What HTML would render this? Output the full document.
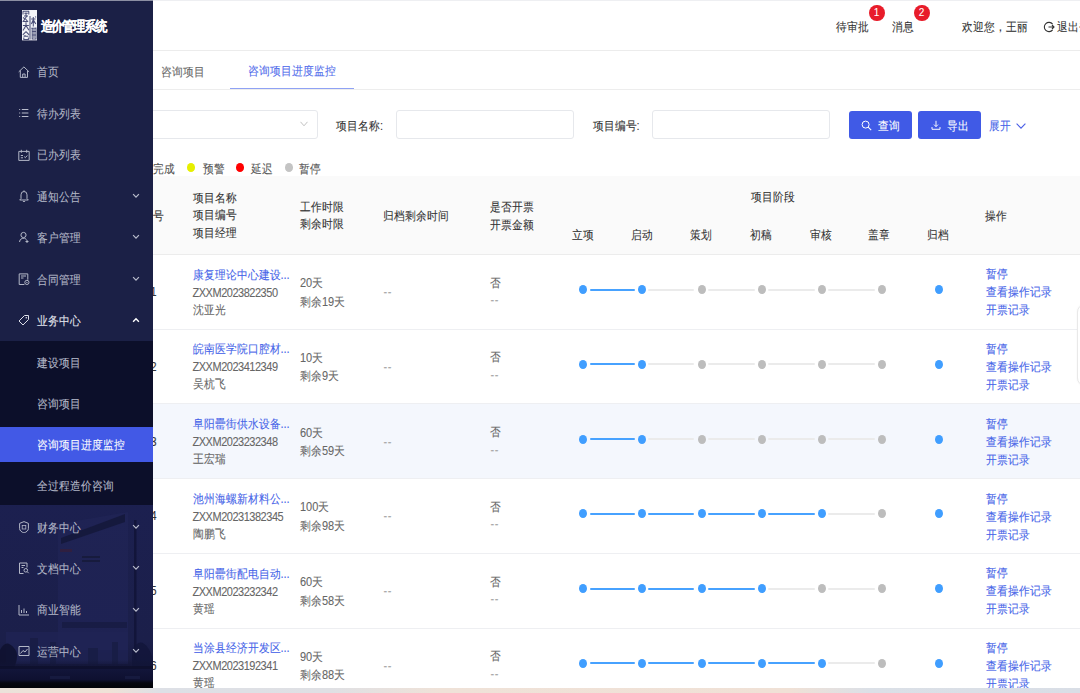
<!DOCTYPE html><html><head><meta charset="utf-8"><style>

*{box-sizing:border-box;margin:0;padding:0}
html,body{width:1080px;height:693px;overflow:hidden;background:#fff}
body{position:relative;font-family:"Liberation Sans", sans-serif;font-size:11px;color:#333;-webkit-text-stroke:0.08px}
.ab{position:absolute;white-space:nowrap}
.t{position:absolute;white-space:nowrap;line-height:14px;height:14px;transform:scaleY(1.12)}
.side{position:absolute;left:0;top:0;width:152.5px;height:688px;background:#1b2046;z-index:10;overflow:hidden}
.mi{position:absolute;left:0;width:152.5px;color:#b3b7c7}
.mi .tx{position:absolute;left:37px;line-height:14px;top:-7.1px;transform:scaleY(1.12)}
.mi svg{position:absolute;left:18px;top:-7px}
.mi .ar{position:absolute;left:131.5px;top:-4px}
.sub{position:absolute;left:0;top:341px;width:152.5px;height:164.2px;background:#0c0f2a}
.act{position:absolute;left:0;top:426.7px;width:152.5px;height:35px;background:#4259e6}
.inp{position:absolute;top:110.4px;height:28.4px;border:1px solid #e6e8ec;border-radius:3px;background:#fff}
.btn{position:absolute;top:110.5px;height:28px;border-radius:3px;background:#405ae6;color:#fff}
.link{color:#4563e8}
.dot{position:absolute;width:8.2px;height:9px;border-radius:50%}
.ln{position:absolute;height:1.9px;border-radius:1px}
.b{background:#409eff}
.g{background:#bdbdbd}
.lg{background:#ebebeb}
.ln.lb{background:#47a2ff}
.row{position:absolute;left:0;width:1080px;height:75px;border-bottom:1px solid #eeeff2}

</style></head><body>
<div class="ab" style="left:0;top:0;width:1080px;height:1px;background:#eeeff2;z-index:20"></div>
<div class="ab" style="left:0;top:0;width:152.5px;height:1px;background:#8c8fa3;z-index:21"></div>
<div class="ab" style="left:0;top:50px;width:1080px;height:1px;background:#ececec"></div>
<div class="t" style="left:836px;top:20px">待审批</div>
<div class="ab" style="left:868.5px;top:4.8px;width:16px;height:16.6px;border-radius:50%;background:#e81c2a;color:#fff;font-size:10px;line-height:16.6px;text-align:center;font-weight:normal">1</div>
<div class="t" style="left:892px;top:20px">消息</div>
<div class="ab" style="left:913.5px;top:4.8px;width:16px;height:16.6px;border-radius:50%;background:#e81c2a;color:#fff;font-size:10px;line-height:16.6px;text-align:center">2</div>
<div class="t" style="left:962px;top:20px">欢迎您，王丽</div>
<svg class="ab" style="left:1043px;top:21px" width="12" height="12" viewBox="0 0 12 12"><path d="M9.6 3.2A4.6 4.6 0 1 0 9.6 8.8" fill="none" stroke="#333" stroke-width="1.1"/><path d="M5.5 6H11M9 4l2 2-2 2" fill="none" stroke="#333" stroke-width="1.1"/></svg>
<div class="t" style="left:1057px;top:20px">退出登录</div>
<div class="ab" style="left:0;top:89px;width:1080px;height:1px;background:#ededed"></div>
<div class="t" style="left:160.5px;top:64.6px;color:#666">咨询项目</div>
<div class="t" style="left:247.6px;top:64.4px;color:#4f6beb">咨询项目进度监控</div>
<div class="ab" style="left:230.4px;top:87.6px;width:123.6px;height:1.5px;background:#8fa2f4"></div>
<div class="inp" style="left:60px;width:257.5px"></div>
<svg class="ab" style="left:300px;top:121px" width="8" height="6" viewBox="0 0 8 6"><path d="M0.5 0.8L4 4.8 7.5 0.8" fill="none" stroke="#bbb" stroke-width="0.9"/></svg>
<div class="t" style="left:336px;top:118.5px">项目名称:</div>
<div class="inp" style="left:395.5px;width:178px"></div>
<div class="t" style="left:592.5px;top:118.5px">项目编号:</div>
<div class="inp" style="left:652.2px;width:178px"></div>
<div class="btn" style="left:849px;width:63px"></div>
<svg class="ab" style="left:861px;top:119.5px" width="11" height="11" viewBox="0 0 11 11"><circle cx="4.6" cy="4.6" r="3.5" fill="none" stroke="#fff" stroke-width="1"/><path d="M7.2 7.2L10.2 10.2" stroke="#fff" stroke-width="1.1"/></svg>
<div class="t" style="left:877.5px;top:119px;color:#fff">查询</div>
<div class="btn" style="left:918px;width:63px"></div>
<svg class="ab" style="left:930.5px;top:119.5px" width="10" height="10" viewBox="0 0 10 10"><path d="M5 0.8V6.6M3 4.6L5 6.6 7 4.6M1 7V9.3H9V7" fill="none" stroke="#fff" stroke-width="0.95"/></svg>
<div class="t" style="left:946.5px;top:119px;color:#fff">导出</div>
<div class="t link" style="left:988.6px;top:119px">展开</div>
<svg class="ab" style="left:1015.5px;top:122.5px" width="10" height="6" viewBox="0 0 10 6"><path d="M0.6 0.6L5 5.2 9.4 0.6" fill="none" stroke="#4a5fe6" stroke-width="1.1"/></svg>
<div class="t" style="left:153px;top:161.8px;color:#555">完成</div>
<div class="ab" style="left:187.3px;top:163.4px;width:8px;height:8.6px;border-radius:50%;background:#e6ef00"></div>
<div class="t" style="left:203px;top:161.8px;color:#555">预警</div>
<div class="ab" style="left:236px;top:163.4px;width:8px;height:8.6px;border-radius:50%;background:#f00"></div>
<div class="t" style="left:251px;top:161.8px;color:#555">延迟</div>
<div class="ab" style="left:284.8px;top:163.4px;width:8px;height:8.6px;border-radius:50%;background:#c4c4c4"></div>
<div class="t" style="left:299px;top:161.8px;color:#555">暂停</div>
<div class="ab" style="left:0;top:176.4px;width:1080px;height:77.6px;background:#fafafa"></div>
<div class="ab" style="left:0;top:254px;width:1080px;height:1px;background:#ececec"></div>
<div class="t" style="left:142px;top:209px">序号</div>
<div class="t" style="left:193px;top:190.8px">项目名称</div>
<div class="t" style="left:193px;top:207.6px">项目编号</div>
<div class="t" style="left:193px;top:225.5px">项目经理</div>
<div class="t" style="left:300.4px;top:200px">工作时限</div>
<div class="t" style="left:300.4px;top:217px">剩余时限</div>
<div class="t" style="left:383px;top:209px">归档剩余时间</div>
<div class="t" style="left:490px;top:199.5px">是否开票</div>
<div class="t" style="left:490px;top:217.5px">开票金额</div>
<div class="t" style="left:750.5px;top:190px">项目阶段</div>
<div class="t" style="left:572.1px;top:228px">立项</div>
<div class="t" style="left:631.3px;top:228px">启动</div>
<div class="t" style="left:690.3px;top:228px">策划</div>
<div class="t" style="left:750.0px;top:228px">初稿</div>
<div class="t" style="left:809.5px;top:228px">审核</div>
<div class="t" style="left:868.4px;top:228px">盖章</div>
<div class="t" style="left:926.5px;top:228px">归档</div>
<div class="t" style="left:985px;top:209px">操作</div>
<div class="ab" style="left:0;top:329px;width:1080px;height:1px;background:#eeeff2"></div>
<div class="t" style="left:150.5px;top:285.2px">1</div>
<div class="t link" style="left:192.5px;top:267.5px">康复理论中心建设...</div>
<div class="t code" style="left:192.5px;top:285.6px;color:#666;letter-spacing:-0.48px">ZXXM2023822350</div>
<div class="t" style="left:192.5px;top:302.6px;color:#666">沈亚光</div>
<div class="t" style="left:300px;top:276.2px;color:#666">20天</div>
<div class="t" style="left:300px;top:294.7px;color:#666">剩余19天</div>
<div class="t" style="left:383.5px;top:285.2px;color:#aaa;letter-spacing:0.6px">--</div>
<div class="t" style="left:490px;top:275.5px;color:#666">否</div>
<div class="t" style="left:490.5px;top:293.2px;color:#aaa;letter-spacing:0.6px">--</div>
<div class="dot b" style="left:579.30px;top:285.20px"></div>
<div class="ln lb" style="left:589.50px;top:288.75px;width:45.10px"></div>
<div class="dot b" style="left:638.10px;top:285.20px"></div>
<div class="ln lg" style="left:648.30px;top:288.75px;width:46.20px"></div>
<div class="dot g" style="left:698.00px;top:285.20px"></div>
<div class="ln lg" style="left:708.20px;top:288.75px;width:46.40px"></div>
<div class="dot g" style="left:758.10px;top:285.20px"></div>
<div class="ln lg" style="left:768.30px;top:288.75px;width:46.40px"></div>
<div class="dot g" style="left:818.20px;top:285.20px"></div>
<div class="ln lg" style="left:828.40px;top:288.75px;width:46.40px"></div>
<div class="dot g" style="left:878.30px;top:285.20px"></div>
<div class="dot b" style="left:934.50px;top:285.20px"></div>
<div class="t link" style="left:985.6px;top:267.3px">暂停</div>
<div class="t link" style="left:985.6px;top:285.3px">查看操作记录</div>
<div class="t link" style="left:985.6px;top:303.3px">开票记录</div>
<div class="ab" style="left:0;top:403px;width:1080px;height:1px;background:#eeeff2"></div>
<div class="t" style="left:150.5px;top:359.9px">2</div>
<div class="t link" style="left:192.5px;top:342.2px">皖南医学院口腔材...</div>
<div class="t code" style="left:192.5px;top:360.3px;color:#666;letter-spacing:-0.48px">ZXXM2023412349</div>
<div class="t" style="left:192.5px;top:377.3px;color:#666">吴杭飞</div>
<div class="t" style="left:300px;top:350.9px;color:#666">10天</div>
<div class="t" style="left:300px;top:369.4px;color:#666">剩余9天</div>
<div class="t" style="left:383.5px;top:359.9px;color:#aaa;letter-spacing:0.6px">--</div>
<div class="t" style="left:490px;top:350.2px;color:#666">否</div>
<div class="t" style="left:490.5px;top:367.9px;color:#aaa;letter-spacing:0.6px">--</div>
<div class="dot b" style="left:579.30px;top:359.94px"></div>
<div class="ln lb" style="left:589.50px;top:363.49px;width:45.10px"></div>
<div class="dot b" style="left:638.10px;top:359.94px"></div>
<div class="ln lg" style="left:648.30px;top:363.49px;width:46.20px"></div>
<div class="dot g" style="left:698.00px;top:359.94px"></div>
<div class="ln lg" style="left:708.20px;top:363.49px;width:46.40px"></div>
<div class="dot g" style="left:758.10px;top:359.94px"></div>
<div class="ln lg" style="left:768.30px;top:363.49px;width:46.40px"></div>
<div class="dot g" style="left:818.20px;top:359.94px"></div>
<div class="ln lg" style="left:828.40px;top:363.49px;width:46.40px"></div>
<div class="dot g" style="left:878.30px;top:359.94px"></div>
<div class="dot b" style="left:934.50px;top:359.94px"></div>
<div class="t link" style="left:985.6px;top:342.0px">暂停</div>
<div class="t link" style="left:985.6px;top:360.0px">查看操作记录</div>
<div class="t link" style="left:985.6px;top:378.0px">开票记录</div>
<div class="ab" style="left:0;top:404px;width:1080px;height:74px;background:#f4f7fd"></div>
<div class="ab" style="left:0;top:478px;width:1080px;height:1px;background:#eeeff2"></div>
<div class="t" style="left:150.5px;top:434.7px">3</div>
<div class="t link" style="left:192.5px;top:417.0px">阜阳罍街供水设备...</div>
<div class="t code" style="left:192.5px;top:435.1px;color:#666;letter-spacing:-0.48px">ZXXM2023232348</div>
<div class="t" style="left:192.5px;top:452.1px;color:#666">王宏瑞</div>
<div class="t" style="left:300px;top:425.7px;color:#666">60天</div>
<div class="t" style="left:300px;top:444.2px;color:#666">剩余59天</div>
<div class="t" style="left:383.5px;top:434.7px;color:#aaa;letter-spacing:0.6px">--</div>
<div class="t" style="left:490px;top:425.0px;color:#666">否</div>
<div class="t" style="left:490.5px;top:442.7px;color:#aaa;letter-spacing:0.6px">--</div>
<div class="dot b" style="left:579.30px;top:434.68px"></div>
<div class="ln lb" style="left:589.50px;top:438.23px;width:45.10px"></div>
<div class="dot b" style="left:638.10px;top:434.68px"></div>
<div class="ln lg" style="left:648.30px;top:438.23px;width:46.20px"></div>
<div class="dot g" style="left:698.00px;top:434.68px"></div>
<div class="ln lg" style="left:708.20px;top:438.23px;width:46.40px"></div>
<div class="dot g" style="left:758.10px;top:434.68px"></div>
<div class="ln lg" style="left:768.30px;top:438.23px;width:46.40px"></div>
<div class="dot g" style="left:818.20px;top:434.68px"></div>
<div class="ln lg" style="left:828.40px;top:438.23px;width:46.40px"></div>
<div class="dot g" style="left:878.30px;top:434.68px"></div>
<div class="dot b" style="left:934.50px;top:434.68px"></div>
<div class="t link" style="left:985.6px;top:416.8px">暂停</div>
<div class="t link" style="left:985.6px;top:434.8px">查看操作记录</div>
<div class="t link" style="left:985.6px;top:452.8px">开票记录</div>
<div class="ab" style="left:0;top:553px;width:1080px;height:1px;background:#eeeff2"></div>
<div class="t" style="left:150.5px;top:509.4px">4</div>
<div class="t link" style="left:192.5px;top:491.7px">池州海螺新材料公...</div>
<div class="t code" style="left:192.5px;top:509.8px;color:#666;letter-spacing:-0.48px">ZXXM20231382345</div>
<div class="t" style="left:192.5px;top:526.8px;color:#666">陶鹏飞</div>
<div class="t" style="left:300px;top:500.4px;color:#666">100天</div>
<div class="t" style="left:300px;top:518.9px;color:#666">剩余98天</div>
<div class="t" style="left:383.5px;top:509.4px;color:#aaa;letter-spacing:0.6px">--</div>
<div class="t" style="left:490px;top:499.7px;color:#666">否</div>
<div class="t" style="left:490.5px;top:517.4px;color:#aaa;letter-spacing:0.6px">--</div>
<div class="dot b" style="left:579.30px;top:509.42px"></div>
<div class="ln lb" style="left:589.50px;top:512.97px;width:45.10px"></div>
<div class="dot b" style="left:638.10px;top:509.42px"></div>
<div class="ln lb" style="left:648.30px;top:512.97px;width:46.20px"></div>
<div class="dot b" style="left:698.00px;top:509.42px"></div>
<div class="ln lb" style="left:708.20px;top:512.97px;width:46.40px"></div>
<div class="dot b" style="left:758.10px;top:509.42px"></div>
<div class="ln lb" style="left:768.30px;top:512.97px;width:46.40px"></div>
<div class="dot b" style="left:818.20px;top:509.42px"></div>
<div class="ln lg" style="left:828.40px;top:512.97px;width:46.40px"></div>
<div class="dot g" style="left:878.30px;top:509.42px"></div>
<div class="dot b" style="left:934.50px;top:509.42px"></div>
<div class="t link" style="left:985.6px;top:491.5px">暂停</div>
<div class="t link" style="left:985.6px;top:509.5px">查看操作记录</div>
<div class="t link" style="left:985.6px;top:527.5px">开票记录</div>
<div class="ab" style="left:0;top:628px;width:1080px;height:1px;background:#eeeff2"></div>
<div class="t" style="left:150.5px;top:584.2px">5</div>
<div class="t link" style="left:192.5px;top:566.5px">阜阳罍街配电自动...</div>
<div class="t code" style="left:192.5px;top:584.6px;color:#666;letter-spacing:-0.48px">ZXXM2023232342</div>
<div class="t" style="left:192.5px;top:601.6px;color:#666">黄瑶</div>
<div class="t" style="left:300px;top:575.2px;color:#666">60天</div>
<div class="t" style="left:300px;top:593.7px;color:#666">剩余58天</div>
<div class="t" style="left:383.5px;top:584.2px;color:#aaa;letter-spacing:0.6px">--</div>
<div class="t" style="left:490px;top:574.5px;color:#666">否</div>
<div class="t" style="left:490.5px;top:592.2px;color:#aaa;letter-spacing:0.6px">--</div>
<div class="dot b" style="left:579.30px;top:584.16px"></div>
<div class="ln lb" style="left:589.50px;top:587.71px;width:45.10px"></div>
<div class="dot b" style="left:638.10px;top:584.16px"></div>
<div class="ln lb" style="left:648.30px;top:587.71px;width:46.20px"></div>
<div class="dot b" style="left:698.00px;top:584.16px"></div>
<div class="ln lb" style="left:708.20px;top:587.71px;width:46.40px"></div>
<div class="dot b" style="left:758.10px;top:584.16px"></div>
<div class="ln lg" style="left:768.30px;top:587.71px;width:46.40px"></div>
<div class="dot g" style="left:818.20px;top:584.16px"></div>
<div class="ln lg" style="left:828.40px;top:587.71px;width:46.40px"></div>
<div class="dot g" style="left:878.30px;top:584.16px"></div>
<div class="dot b" style="left:934.50px;top:584.16px"></div>
<div class="t link" style="left:985.6px;top:566.3px">暂停</div>
<div class="t link" style="left:985.6px;top:584.3px">查看操作记录</div>
<div class="t link" style="left:985.6px;top:602.3px">开票记录</div>
<div class="ab" style="left:0;top:760px;width:1080px;height:1px;background:#eeeff2"></div>
<div class="t" style="left:150.5px;top:658.9px">6</div>
<div class="t link" style="left:192.5px;top:641.2px">当涂县经济开发区...</div>
<div class="t code" style="left:192.5px;top:659.3px;color:#666;letter-spacing:-0.48px">ZXXM2023192341</div>
<div class="t" style="left:192.5px;top:676.3px;color:#666">黄瑶</div>
<div class="t" style="left:300px;top:649.9px;color:#666">90天</div>
<div class="t" style="left:300px;top:668.4px;color:#666">剩余88天</div>
<div class="t" style="left:383.5px;top:658.9px;color:#aaa;letter-spacing:0.6px">--</div>
<div class="t" style="left:490px;top:649.2px;color:#666">否</div>
<div class="t" style="left:490.5px;top:666.9px;color:#aaa;letter-spacing:0.6px">--</div>
<div class="dot b" style="left:579.30px;top:658.90px"></div>
<div class="ln lb" style="left:589.50px;top:662.45px;width:45.10px"></div>
<div class="dot b" style="left:638.10px;top:658.90px"></div>
<div class="ln lb" style="left:648.30px;top:662.45px;width:46.20px"></div>
<div class="dot b" style="left:698.00px;top:658.90px"></div>
<div class="ln lb" style="left:708.20px;top:662.45px;width:46.40px"></div>
<div class="dot b" style="left:758.10px;top:658.90px"></div>
<div class="ln lb" style="left:768.30px;top:662.45px;width:46.40px"></div>
<div class="dot b" style="left:818.20px;top:658.90px"></div>
<div class="ln lg" style="left:828.40px;top:662.45px;width:46.40px"></div>
<div class="dot g" style="left:878.30px;top:658.90px"></div>
<div class="dot b" style="left:934.50px;top:658.90px"></div>
<div class="t link" style="left:985.6px;top:641.0px">暂停</div>
<div class="t link" style="left:985.6px;top:659.0px">查看操作记录</div>
<div class="t link" style="left:985.6px;top:677.0px">开票记录</div>
<div class="ab" style="left:1076.8px;top:303.5px;width:20px;height:82.5px;border:1px solid #e9e9e9;border-radius:8px;box-shadow:0 0 2px rgba(0,0,0,0.05);background:#fff;z-index:5"></div>
<div class="ab" style="left:0;top:688px;width:1080px;height:5px;background:linear-gradient(90deg,#ebe2da 0px,#efe2d7 110px,#dde0e6 160px,#dfe0e4 330px,#efe2d8 440px,#f0e1d6 790px,#dbe0e7 870px,#d9dee6 1080px);z-index:30"></div>
<div class="side">
<svg class="ab" style="left:0;top:500px" width="153" height="188" viewBox="0 0 153 188">
<defs>
<linearGradient id="sk" x1="0" y1="0" x2="0" y2="1"><stop offset="0" stop-color="#1c2050"/><stop offset="0.75" stop-color="#1b1f4a"/><stop offset="0.88" stop-color="#171a40"/><stop offset="1" stop-color="#10132e"/></linearGradient>
<linearGradient id="bt" x1="0" y1="0" x2="0" y2="1"><stop offset="0" stop-color="#10132e" stop-opacity="0"/><stop offset="0.3" stop-color="#12153a" stop-opacity="0.9"/><stop offset="0.7" stop-color="#0e1030"/><stop offset="0.82" stop-color="#05060f"/><stop offset="1" stop-color="#020307"/></linearGradient>
</defs>
<rect width="153" height="188" fill="url(#sk)"/>
<path d="M58 24L128 12V150H58Z" fill="#202456" opacity="0.75"/>
<path d="M61 38L125 14V22L61 44Z" fill="#14173a" opacity="0.85"/>
<rect x="60" y="49" width="12" height="3" fill="#3b1d34" opacity="0.6"/>
<rect x="82" y="56" width="18" height="2" fill="#171b3d"/>
<rect x="82" y="60" width="18" height="2" fill="#171b3d"/>
<rect x="134" y="20" width="2.5" height="140" fill="#12153a"/>
<rect x="62" y="122" width="65" height="6" fill="#171b42" opacity="0.8"/>
<rect x="6" y="132" width="122" height="32" fill="#1f2355" opacity="0.7"/>
<path d="M30 138h8v26h-8zM50 142h6v22h-6zM88 148h10v16h-10zM112 142h6v22h-6z" fill="#161a40" opacity="0.6"/>
<path d="M0 150q6-12 14-2q6 6 0 20H0Z" fill="#0f1230" opacity="0.9"/>
<path d="M132 150q8-14 16-2q6 8 5 20h-21Z" fill="#12153a" opacity="0.8"/>
<rect x="0" y="160" width="153" height="28" fill="url(#bt)"/>
<rect x="0" y="166" width="153" height="3" fill="#0c0e26" opacity="0.6"/>
<path d="M50 176h20v3h-20zM125 176h15v3h-15z" fill="#1a1e44" opacity="0.7"/>
</svg>
<div class="sub"></div>
<div class="act"></div>
<svg class="ab" style="left:21.7px;top:10.2px" width="15.2" height="30.4" viewBox="0 0 15.2 30.4"><rect width="15.2" height="30.4" fill="#f2f3f7"/>
<g fill="none" stroke="#2e3363" stroke-width="1.05" opacity="0.85">
<path d="M0.8 1.2h6.2M1 1.2v3.2M6.8 1.2v3.2M2.4 3.2h3.4M4 2.4v3M2 6h4"/>
<path d="M5 5.8L1.2 11.5h5M3.6 9l2.4 2.8M1 7.5l1.5 1"/>
<path d="M4 12.2v3.2M0.9 15.6h6M4 15.6L1 20.5M4 15.6l3 4.6M2.2 17.5l0.8 1"/>
<path d="M4 21.6L0.8 24.8M4 21.6l3.2 3.2M1.6 26.2h4.8M1.8 27.6v2h4.6v-2M3 25v1"/>
<path d="M8 6v23.6"/>
<path d="M11.3 7v9.5M9.2 9h4.4M11.3 9.8L9.4 14M11.3 9.8l2.5 4.2M9.8 12.2h3M13.2 6.5l0.8 0.8"/>
<path d="M14 17.5v12M9.3 18.2h4.7M10.2 18.2v11.3M10.2 21.6h3.8M10.2 25h3.8M10.2 29h3.8M12 19v9"/>
</g></svg>
<div class="ab" style="left:40.5px;top:18.4px;color:#fff;font-size:12px;font-weight:bold;line-height:16px;letter-spacing:-1.1px;transform:scaleY(1.13)">造价管理系统</div>
<div class="mi" style="top:72.5px">
<svg width="12" height="12" viewBox="0 0 12 12"><path d="M0.7 5.9L5.9 0.9 11.1 5.9M2.3 4.5V11.4H9.5V4.5M4.7 11.4V8H7.1V11.4" fill="none" stroke="#b3b7c7" stroke-width="1"/></svg>
<div class="tx">首页</div>
</div>
<div class="mi" style="top:114.2px">
<svg width="12" height="12" viewBox="0 0 12 12"><path d="M1.2 2.5h1M1.2 6h1M1.2 9.5h1M3.8 2.5h6.6M3.8 6h6.6M3.8 9.5h6.6" stroke="#b9bccc" stroke-width="1"/></svg>
<div class="tx">待办列表</div>
</div>
<div class="mi" style="top:155.5px">
<svg width="12" height="12" viewBox="0 0 12 12"><path d="M0.8 2.4h10.4v9H0.8zM3.3 0.8v3M8.7 0.8v3M2.8 6.5h2.2M2.8 8.8h2.2M6.2 7.6l1.1 1.1 2-2.2" fill="none" stroke="#b3b7c7" stroke-width="1"/></svg>
<div class="tx">已办列表</div>
</div>
<div class="mi" style="top:196.8px">
<svg width="12" height="12" viewBox="0 0 12 12"><path d="M3 8.6V4.8a3 3.3 0 0 1 6 0V8.6L10.3 10H1.7Z M4.9 11.6h2.2M6 0.4v1" fill="none" stroke="#b3b7c7" stroke-width="1"/></svg>
<div class="tx">通知公告</div>
<svg class="ar" width="8" height="6" viewBox="0 0 8 6"><path d="M1.1 1.2L4 4.2 6.9 1.2" fill="none" stroke="#b9bccc" stroke-width="1.2"/></svg>
</div>
<div class="mi" style="top:238.2px">
<svg width="12" height="12" viewBox="0 0 12 12"><circle cx="5.5" cy="4" r="2.6" fill="none" stroke="#b3b7c7" stroke-width="1"/><path d="M1.5 11a4 4 0 0 1 7-2.5M9 9v3M7.5 10.5h3" fill="none" stroke="#b3b7c7" stroke-width="1"/></svg>
<div class="tx">客户管理</div>
<svg class="ar" width="8" height="6" viewBox="0 0 8 6"><path d="M1.1 1.2L4 4.2 6.9 1.2" fill="none" stroke="#b9bccc" stroke-width="1.2"/></svg>
</div>
<div class="mi" style="top:279.6px">
<svg width="12" height="12" viewBox="0 0 12 12"><path d="M1.2 0.9h8.6v5.8M1.2 0.9v10.6h5.2M3 3h5M3 5h2.5" fill="none" stroke="#b3b7c7" stroke-width="1"/><circle cx="8.9" cy="9.4" r="2.1" fill="none" stroke="#b3b7c7" stroke-width="1"/><circle cx="8.9" cy="9.4" r="0.6" fill="#b3b7c7"/></svg>
<div class="tx">合同管理</div>
<svg class="ar" width="8" height="6" viewBox="0 0 8 6"><path d="M1.1 1.2L4 4.2 6.9 1.2" fill="none" stroke="#b9bccc" stroke-width="1.2"/></svg>
</div>
<div class="mi" style="top:321.3px">
<svg width="12" height="12" viewBox="0 0 12 12"><path d="M6.5 1.5H10.5V5.5L5 11 1 7Z" fill="none" stroke="#dcdee8" stroke-width="1"/><circle cx="8.3" cy="3.7" r="0.8" fill="#dcdee8"/></svg>
<div class="tx" style="color:#e4e6ee">业务中心</div>
<svg class="ar" width="8" height="6" viewBox="0 0 8 6"><path d="M1.1 4.8L4 1.8 6.9 4.8" fill="none" stroke="#fff" stroke-width="1.4"/></svg>
</div>
<div class="mi" style="top:527.8px">
<svg width="12" height="12" viewBox="0 0 12 12"><path d="M6 0.6L10.4 2.4V7.6C10.4 9.6 8.4 11 6 12 3.6 11 1.6 9.6 1.6 7.6V2.4Z" fill="none" stroke="#b3b7c7" stroke-width="1"/><rect x="4.2" y="4.4" width="3.6" height="3.6" fill="none" stroke="#b3b7c7" stroke-width="0.8"/></svg>
<div class="tx">财务中心</div>
<svg class="ar" width="8" height="6" viewBox="0 0 8 6"><path d="M1.1 1.2L4 4.2 6.9 1.2" fill="none" stroke="#b9bccc" stroke-width="1.2"/></svg>
</div>
<div class="mi" style="top:569.2px">
<svg width="12" height="12" viewBox="0 0 12 12"><path d="M9 5.5V1h-7.5v10.5h4M3.5 3.5h3.5M3.5 5.5h2" fill="none" stroke="#b3b7c7" stroke-width="1"/><circle cx="7.8" cy="8.3" r="1.8" fill="none" stroke="#b3b7c7" stroke-width="1"/><path d="M9.2 9.7l1.5 1.5" stroke="#b3b7c7" stroke-width="1"/></svg>
<div class="tx">文档中心</div>
<svg class="ar" width="8" height="6" viewBox="0 0 8 6"><path d="M1.1 1.2L4 4.2 6.9 1.2" fill="none" stroke="#b9bccc" stroke-width="1.2"/></svg>
</div>
<div class="mi" style="top:610.5px">
<svg width="12" height="12" viewBox="0 0 12 12"><path d="M1 1v10h10M3.5 9V6M6 9V4.5M8.5 9V7" fill="none" stroke="#b3b7c7" stroke-width="1"/></svg>
<div class="tx">商业智能</div>
<svg class="ar" width="8" height="6" viewBox="0 0 8 6"><path d="M1.1 1.2L4 4.2 6.9 1.2" fill="none" stroke="#b9bccc" stroke-width="1.2"/></svg>
</div>
<div class="mi" style="top:651.8px">
<svg width="12" height="12" viewBox="0 0 12 12"><path d="M1 1.5h10v9H1zM2.5 8.5l2.5-3 2 1.5 2.5-3" fill="none" stroke="#b3b7c7" stroke-width="1"/></svg>
<div class="tx">运营中心</div>
<svg class="ar" width="8" height="6" viewBox="0 0 8 6"><path d="M1.1 1.2L4 4.2 6.9 1.2" fill="none" stroke="#b9bccc" stroke-width="1.2"/></svg>
</div>
<div class="t" style="left:37px;top:355.5px;color:#b3b7c7">建设项目</div>
<div class="t" style="left:37px;top:396.7px;color:#b3b7c7">咨询项目</div>
<div class="t" style="left:37px;top:437.9px;color:#fff">咨询项目进度监控</div>
<div class="t" style="left:37px;top:478.9px;color:#b3b7c7">全过程造价咨询</div>
</div>
</body></html>
